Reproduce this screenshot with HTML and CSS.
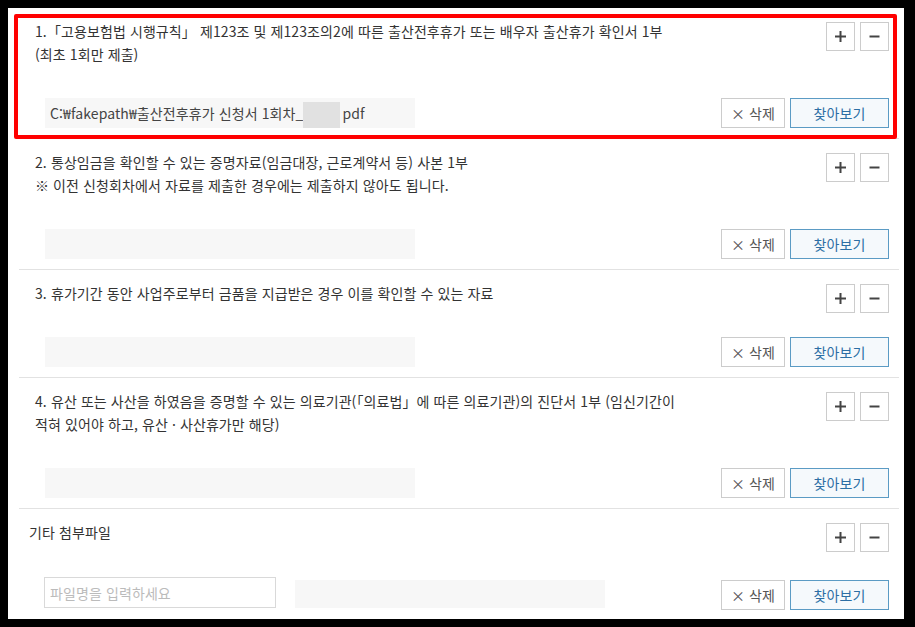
FILE: index.html
```html
<!DOCTYPE html>
<html lang="ko">
<head>
    <meta charset="UTF-8">
    <meta name="viewport" content="width=device-width, initial-scale=1.0">
    <title>첨부서류</title>
    <link rel="stylesheet" href="styles.css">
</head>
<body>
    <div class="panel">
        <ul class="file-list">
            <li class="file-item">
                <div class="item-head">
                    <p class="item-title">1.「고용보험법 시행규칙」 제123조 및 제123조의2에 따른 출산전후휴가 또는 배우자 출산휴가 확인서 1부<br>(최초 1회만 제출)</p>
                    <div class="item-tools">
                        <button type="button" class="tool-btn" aria-label="추가">
                            <svg width="11" height="11" viewBox="0 0 11 11"><path d="M5.5 0v11M0 5.5h11" stroke="#444" stroke-width="2"/></svg>
                        </button>
                        <button type="button" class="tool-btn" aria-label="삭제">
                            <svg width="11" height="11" viewBox="0 0 11 11"><path d="M0.5 5.5h10" stroke="#444" stroke-width="2"/></svg>
                        </button>
                    </div>
                </div>
                <div class="file-row">
                    <div class="file-name">C:₩fakepath₩출산전후휴가 신청서 1회차_<span class="blur"></span>pdf</div>
                    <div class="file-actions">
                        <button type="button" class="del-btn">× 삭제</button>
                        <button type="button" class="find-btn">찾아보기</button>
                    </div>
                </div>
                <div class="mark"></div>
            </li>

            <li class="file-item">
                <div class="item-head">
                    <p class="item-title">2. 통상임금을 확인할 수 있는 증명자료(임금대장, 근로계약서 등) 사본 1부<br>※ 이전 신청회차에서 자료를 제출한 경우에는 제출하지 않아도 됩니다.</p>
                    <div class="item-tools">
                        <button type="button" class="tool-btn" aria-label="추가">
                            <svg width="11" height="11" viewBox="0 0 11 11"><path d="M5.5 0v11M0 5.5h11" stroke="#444" stroke-width="2"/></svg>
                        </button>
                        <button type="button" class="tool-btn" aria-label="삭제">
                            <svg width="11" height="11" viewBox="0 0 11 11"><path d="M0.5 5.5h10" stroke="#444" stroke-width="2"/></svg>
                        </button>
                    </div>
                </div>
                <div class="file-row">
                    <div class="file-name"></div>
                    <div class="file-actions">
                        <button type="button" class="del-btn">× 삭제</button>
                        <button type="button" class="find-btn">찾아보기</button>
                    </div>
                </div>
            </li>

            <li class="file-item">
                <div class="item-head">
                    <p class="item-title">3. 휴가기간 동안 사업주로부터 금품을 지급받은 경우 이를 확인할 수 있는 자료</p>
                    <div class="item-tools">
                        <button type="button" class="tool-btn" aria-label="추가">
                            <svg width="11" height="11" viewBox="0 0 11 11"><path d="M5.5 0v11M0 5.5h11" stroke="#444" stroke-width="2"/></svg>
                        </button>
                        <button type="button" class="tool-btn" aria-label="삭제">
                            <svg width="11" height="11" viewBox="0 0 11 11"><path d="M0.5 5.5h10" stroke="#444" stroke-width="2"/></svg>
                        </button>
                    </div>
                </div>
                <div class="file-row">
                    <div class="file-name"></div>
                    <div class="file-actions">
                        <button type="button" class="del-btn">× 삭제</button>
                        <button type="button" class="find-btn">찾아보기</button>
                    </div>
                </div>
            </li>

            <li class="file-item">
                <div class="item-head">
                    <p class="item-title">4. 유산 또는 사산을 하였음을 증명할 수 있는 의료기관(「의료법」에 따른 의료기관)의 진단서 1부 (임신기간이<br>적혀 있어야 하고, 유산 · 사산휴가만 해당)</p>
                    <div class="item-tools">
                        <button type="button" class="tool-btn" aria-label="추가">
                            <svg width="11" height="11" viewBox="0 0 11 11"><path d="M5.5 0v11M0 5.5h11" stroke="#444" stroke-width="2"/></svg>
                        </button>
                        <button type="button" class="tool-btn" aria-label="삭제">
                            <svg width="11" height="11" viewBox="0 0 11 11"><path d="M0.5 5.5h10" stroke="#444" stroke-width="2"/></svg>
                        </button>
                    </div>
                </div>
                <div class="file-row">
                    <div class="file-name"></div>
                    <div class="file-actions">
                        <button type="button" class="del-btn">× 삭제</button>
                        <button type="button" class="find-btn">찾아보기</button>
                    </div>
                </div>
            </li>

            <li class="file-item etc">
                <div class="item-head">
                    <p class="item-title">기타 첨부파일</p>
                    <div class="item-tools">
                        <button type="button" class="tool-btn" aria-label="추가">
                            <svg width="11" height="11" viewBox="0 0 11 11"><path d="M5.5 0v11M0 5.5h11" stroke="#444" stroke-width="2"/></svg>
                        </button>
                        <button type="button" class="tool-btn" aria-label="삭제">
                            <svg width="11" height="11" viewBox="0 0 11 11"><path d="M0.5 5.5h10" stroke="#444" stroke-width="2"/></svg>
                        </button>
                    </div>
                </div>
                <div class="file-row">
                    <input type="text" class="name-input" placeholder="파일명을 입력하세요">
                    <div class="file-name"></div>
                    <div class="file-actions">
                        <button type="button" class="del-btn">× 삭제</button>
                        <button type="button" class="find-btn">찾아보기</button>
                    </div>
                </div>
            </li>
        </ul>
    </div>
</body>
</html>
```

FILE: styles.css
```css
* {
    margin: 0;
    padding: 0;
    box-sizing: border-box;
}

body {
    background: #000;
    font-family: "Malgun Gothic", "Noto Sans CJK KR", sans-serif;
    font-size: 14px;
    color: #333;
    letter-spacing: 0.1px;
}

.panel {
    margin: 8px 0 0 8px;
    width: 896px;
    height: 611px;
    background: #fff;
    overflow: hidden;
}

.file-list {
    list-style: none;
    margin: 0 5px 0 11px;
}

.file-item {
    position: relative;
    padding: 14px 10px 10px 16px;
    border-bottom: 1px solid #e2e2e2;
}

.file-item.etc {
    padding-left: 10px;
    border-bottom: none;
}

.item-head {
    display: flex;
    align-items: flex-start;
    justify-content: space-between;
}

.item-title {
    line-height: 23px;
    margin-top: -2px;
    padding-bottom: 32px;
}

.etc .item-title {
    padding-bottom: 31px;
}

.item-tools {
    display: flex;
    gap: 5px;
}

.tool-btn {
    width: 29px;
    height: 29px;
    background: #fff;
    border: 1px solid #ccc;
    display: flex;
    align-items: center;
    justify-content: center;
    cursor: pointer;
}

.file-row {
    display: flex;
    align-items: center;
    padding-left: 10px;
}

.etc .file-row {
    padding-left: 15px;
}

.file-name {
    width: 370px;
    height: 30px;
    background: #f7f7f7;
    padding-left: 5px;
    line-height: 30px;
    color: #444;
    white-space: nowrap;
    overflow: hidden;
}

.blur {
    display: inline-block;
    width: 37px;
    height: 27px;
    vertical-align: middle;
    background: #e1e1e1;
    margin: 0 2px 0 0;
}

.name-input {
    width: 232px;
    height: 31px;
    border: 1px solid #d9d9d9;
    padding-left: 5px;
    font-family: inherit;
    font-size: 14px;
    letter-spacing: 0.1px;
    color: #333;
    margin-right: 19px;
}

.name-input::placeholder {
    color: #bbb;
}

.etc .file-name {
    width: 310px;
    height: 28px;
    margin-top: 3px;
}

.file-actions {
    margin-left: auto;
    display: flex;
    gap: 5px;
}

.etc .file-actions {
    margin-top: 5px;
}

.del-btn,
.find-btn {
    height: 30px;
    font-family: inherit;
    font-size: 14px;
    letter-spacing: 0.1px;
    cursor: pointer;
}

.del-btn {
    width: 64px;
    background: #fff;
    border: 1px solid #ccc;
    color: #555;
}

.find-btn {
    width: 99px;
    background: #f5f9fc;
    border: 1px solid #5b9bc4;
    color: #2c6ea4;
}

/* red annotation box around the first item */
.mark {
    position: absolute;
    left: -5px;
    top: 6px;
    right: 2px;
    bottom: -1px;
    border: 4px solid #f00;
    border-radius: 2px;
    pointer-events: none;
}
```
